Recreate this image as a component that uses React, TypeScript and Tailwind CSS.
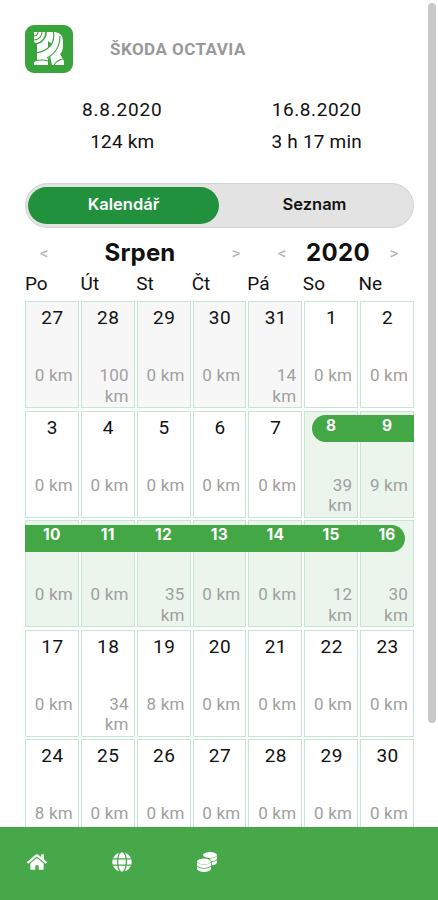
import React from 'react';
import { FaHome, FaGlobe } from 'react-icons/fa';

type Day = { day: number; km: number; outside?: boolean };
type Week = { days: Day[]; from?: number; bar?: string };

const weekDays = ['Po', 'Út', 'St', 'Čt', 'Pá', 'So', 'Ne'];

const makeDays = (start: number, kms: number[]): Day[] =>
  kms.map((km, i) => ({ day: start + i, km }));

const weeks: Week[] = [
  {
    days: [
      { day: 27, km: 0, outside: true },
      { day: 28, km: 100, outside: true },
      { day: 29, km: 0, outside: true },
      { day: 30, km: 0, outside: true },
      { day: 31, km: 14, outside: true },
      { day: 1, km: 0 },
      { day: 2, km: 0 },
    ],
  },
  { days: makeDays(3, [0, 0, 0, 0, 0, 39, 9]), from: 5, bar: 'left-[287px] right-0 rounded-l-full' },
  { days: makeDays(10, [0, 0, 35, 0, 0, 12, 30]), from: 0, bar: 'left-0 right-[9px] rounded-r-full' },
  { days: makeDays(17, [0, 34, 8, 0, 0, 0, 0]) },
  { days: makeDays(24, [8, 0, 0, 0, 0, 0, 0]) },
];

const Logo = () => (
  <svg viewBox="0 0 48 48" className="size-12 shrink-0">
    <rect width="48" height="48" rx="9" fill="#3aa43c" />
    <path d="M9 7H30Q38 8 38 16V21Q38 26 35 29L39 36V40H27L25 31L23 34V40H9V37L12 35V19L9 17Z" fill="#fff" />
    <path d="M23 16L27 19L23 23Z" fill="#3aa43c" />
    <g fill="none" stroke="#3aa43c" strokeWidth="1.1">
      <path d="M13 7A4 4 0 0 1 9 11" />
      <path d="M17 7A8 8 0 0 1 9 15" />
      <path d="M21 7A12 12 0 0 1 9 19" strokeWidth="1.6" />
      <path d="M28.500 7Q31 24 11 28" />
      <path d="M9 36Q17 34 23 36" />
      <path d="M35 11Q35 26 22 33" />
      <path d="M29 40Q32 35 38 34" />
    </g>
  </svg>
);

const Coins = () => (
  <svg viewBox="0 0 20 20" className="size-5" fill="currentColor">
    <ellipse cx="13" cy="3" rx="7" ry="3" />
    <path d="M12.500 6.700Q17 6.700 20 4.300V7Q18.500 9.300 14.500 9.300Q14.200 8 12.500 6.700ZM14.800 10Q18 9.800 20 8.200V11Q18.500 13.200 14.800 13.300Z" />
    <ellipse cx="7" cy="9.500" rx="7" ry="2.900" />
    <path d="M0 10.700Q7 14.700 14 10.700V14Q7 18 0 14ZM0 14.800Q7 18.800 14 14.800V17.300Q12 20 7 20T0 17.300Z" />
  </svg>
);

const Arrow = ({ children }: { children: React.ReactNode }) => (
  <button className="w-4 text-center text-[17px] leading-none text-[#b5b5b5]">{children}</button>
);

const WeekRow = ({ week }: { week: Week }) => (
  <div className="relative grid h-[107px] grid-cols-7 gap-x-[2px]">
    {week.bar && <div className={`absolute top-[4.5px] z-10 h-[27px] bg-[#43a746] ${week.bar}`} />}
    {week.days.map((d, i) => {
      const selected = week.from !== undefined && i >= week.from;
      const background = selected ? 'bg-[#ebf5ec]' : d.outside ? 'bg-[#f7f7f7]' : 'bg-white';
      return (
        <div key={d.day} className={`flex flex-col border border-[#c5e6d2] pr-[5px] ${background}`}>
          <span
            className={
              selected
                ? "relative z-20 h-[63px] pl-[5px] pt-[3px] text-center font-['Inter'] text-[15.5px] font-bold leading-[21px] tracking-[0.3px] text-white"
                : 'h-[63px] pl-[6px] pt-1 text-center text-[19px] leading-6 tracking-[0.5px] text-[#111]'
            }
          >
            {d.day}
          </span>
          <span className={`text-right text-[17px] leading-[20.5px] tracking-[0.2px] text-[#a0a0a0] ${d.km > 9 ? '' : 'whitespace-nowrap'}`}>
            {d.km}{d.km > 9 ? <br /> : ' '}km
          </span>
        </div>
      );
    })}
  </div>
);

const App = () => {
  return (
    <div className="flex h-[900px] w-[438px] flex-col overflow-hidden bg-white font-['Roboto',sans-serif] text-[#111]">
      <div className="flex min-h-0 flex-1 justify-between overflow-hidden">
        <main className="ml-[25px] w-[389px] shrink-0">
          {/* Hlavička */}
          <header className="flex h-[73px] items-end gap-[37px]">
            <Logo />
            <h1 className="pb-[12px] text-[17px] font-bold leading-6 tracking-[0.45px] text-[#999]">ŠKODA OCTAVIA</h1>
          </header>

          {/* Souhrn */}
          <section className="mt-[21px] grid grid-cols-2 text-center text-[19px] leading-8">
            <p className="tracking-[0.8px]">8.8.2020</p>
            <p className="tracking-[0.6px]">16.8.2020</p>
            <p className="tracking-[0.2px]">124 km</p>
            <p className="tracking-[0.2px]">3 h 17 min</p>
          </section>

          {/* Přepínač */}
          <div className="mt-[25px] grid h-[45px] grid-cols-[191px_1fr] rounded-full border border-[#d2d2d2] bg-[#e3e3e3] p-[3px] pl-[2px] font-['Inter'] text-[16.5px] font-semibold">
            <button className="h-[37px] rounded-full bg-[#21913e] pb-[3px] text-white">Kalendář</button>
            <button className="h-[37px] pb-[3px]">Seznam</button>
          </div>

          <div className="mt-[11px] flex h-7 items-center justify-between pl-[11px] pr-[12px]">
            <div className="flex w-[208px] items-center justify-between">
              <Arrow>&lt;</Arrow>
              <h2 className="font-['Inter'] text-2xl font-bold tracking-[0.2px]">Srpen</h2>
              <Arrow>&gt;</Arrow>
            </div>
            <div className="flex w-[128px] items-center justify-between">
              <Arrow>&lt;</Arrow>
              <h2 className="font-['Inter'] text-2xl font-bold tracking-[0.4px]">2020</h2>
              <Arrow>&gt;</Arrow>
            </div>
          </div>

          {/* Kalendář */}
          <div className="mt-[5px] grid h-[29px] grid-cols-7 text-[19px] leading-6">
            {weekDays.map((name) => (
              <span key={name}>{name}</span>
            ))}
          </div>
          <div className="flex flex-col gap-[2.5px]">
            {weeks.map((week) => (
              <WeekRow key={week.days[0].day} week={week} />
            ))}
          </div>
        </main>

        <div className="mr-[2px] mt-[3px] h-[720px] w-2 rounded-full bg-[#c9c9c9]" />
      </div>

      <nav className="flex h-[73px] shrink-0 gap-[65px] bg-[#47a849] pl-[27px] pt-[25px] text-[20px] text-white">
        <FaHome />
        <FaGlobe />
        <Coins />
      </nav>
    </div>
  );
};

export default App;
